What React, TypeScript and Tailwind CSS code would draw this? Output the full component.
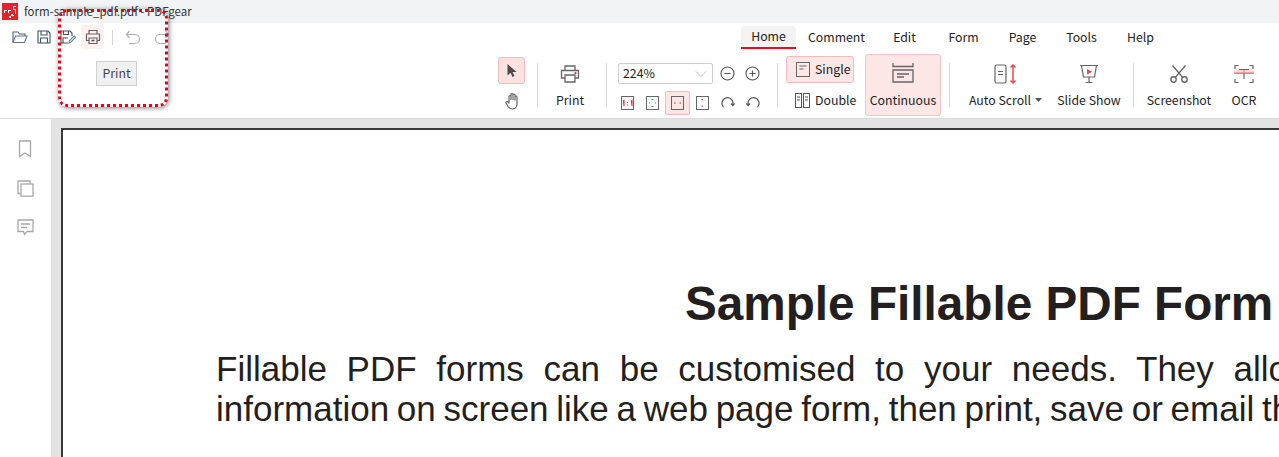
import React from "react";

const G = "#666666";
const R = "#f0444f";

function Svg({ w, h, children, className }: { w: number; h: number; children: React.ReactNode; className?: string }) {
  return (
    <svg width={w} height={h} viewBox={`0 0 ${w} ${h}`} fill="none" stroke={G} strokeWidth={1.2} className={className}>
      {children}
    </svg>
  );
}

function Logo() {
  return (
    <svg width="16" height="17" viewBox="0 0 16 17" className="shrink-0">
      <rect width="16" height="17" fill="#e8202c" />
      <g fill="#fff">
        <rect x="2" y="7" width="1" height="3" /><rect x="3" y="7" width="2" height="1" />
        <rect x="6" y="7" width="1" height="3" /><rect x="7" y="7" width="2" height="1" />
        <rect x="11" y="3" width="3" height="1" /><rect x="11" y="3" width="1" height="3" /><rect x="11" y="6" width="3" height="1" /><rect x="13" y="6" width="1" height="5" />
        <rect x="9" y="11" width="2" height="2" /><rect x="7" y="13" width="2" height="2" /><rect x="11" y="12" width="1" height="1" />
      </g>
    </svg>
  );
}

function Tab({ label, w, active }: { label: string; w: number; active?: boolean }) {
  return (
    <div style={{ width: w }} className={`h-[23px] flex items-center justify-center ${active ? "bg-[#f3f3f3] rounded-t border-b-2 border-[#ee0a1c]" : ""}`}>
      {label}
    </div>
  );
}

function Sep() {
  return <div className="w-px h-[44px] bg-[#d6d6d6] shrink-0" />;
}

function Small({ children, active }: { children: React.ReactNode; active?: boolean }) {
  return (
    <div className={`w-[25px] h-[24px] flex items-center justify-center rounded-[2px] ${active ? "bg-[#fde6e6] border border-[#f8b9b9]" : ""}`}>
      {children}
    </div>
  );
}

export default function App() {
  return (
    <div className="relative w-[1279px] h-[457px] overflow-hidden bg-[#e3e3e3] text-[12.3px] text-[#222] [font-family:'Noto_Sans_CJK_SC','Noto_Sans',sans-serif]">
      {/* title bar */}
      <div className="h-[23px] bg-[#f2f3f5] flex items-center pl-[2px] gap-[6px]">
        <Logo />
        <span className="text-[11.5px] text-[#333] leading-none">form-sample_pdf.pdf - PDFgear</span>
      </div>

      {/* toolbar */}
      <div className="h-[96px] bg-white border-b border-[#dcdcdc] flex">
        {/* quick access */}
        <div className="w-[498px] shrink-0 flex items-start pt-[2px] pl-[12px]">
          <div className="h-[24px] flex items-center">
            <svg width="16" height="14" viewBox="0 0 16 14" fill="none" stroke="#4f5f6f" strokeWidth="1.1">
              <path d="M1 12V2h5l1.5 2H13v2" />
              <path d="M1 12.5h11.5L15 6H3.5z" stroke="#5b7590" />
            </svg>
            <svg width="14" height="14" viewBox="0 0 14 14" fill="none" stroke="#3f5264" strokeWidth="1.1" className="ml-[9px]">
              <path d="M1 1h10l2 2v10H1z" />
              <path d="M4 1v4h6V1M3.5 13V8h7v5" />
            </svg>
            <svg width="16" height="14" viewBox="0 0 16 14" fill="none" stroke="#3f5264" strokeWidth="1.1" className="ml-[9px]">
              <path d="M8 13H1V1h9l2 2v3" />
              <path d="M3.5 1v3.5h5V1M3 13V8h5" />
              <path d="M9 13l.5-2.5L14 6l1.5 1.5-4.5 4.5z" stroke="#5b85b0" />
            </svg>
            <div className="ml-[5px] w-[23px] h-[24px] bg-[#fdf0ef] rounded-[3px] flex items-center justify-center">
              <Svg w={16} h={16}>
                <path d="M4 5V1.5h8V5" />
                <path d="M4 11.5H1.5V5h13v6.5H12" />
                <path d="M4 9h8v5.5H4z" />
                <path d="M6.5 11.5h3" stroke="#555" strokeWidth="1.6" />
              </Svg>
            </div>
            <div className="ml-[8px] w-px h-[15px] bg-[#d4d4d4]" />
            <svg width="16" height="15" viewBox="0 0 16 15" fill="none" stroke="#b0b0b0" strokeWidth="1.2" className="ml-[12px]">
              <path d="M4.5 1L1.5 4.5 4.5 8" />
              <path d="M1.5 4.5H10a4.5 4.5 0 010 9H4" />
            </svg>
            <svg width="16" height="15" viewBox="0 0 16 15" fill="none" stroke="#b0b0b0" strokeWidth="1.2" className="ml-[13px]">
              <path d="M11.5 1l3 3.5-3 3.5" />
              <path d="M14.5 4.5H6a4.5 4.5 0 000 9h6" />
            </svg>
          </div>
        </div>

        {/* ribbon */}
        <div className="flex-1 flex flex-col">
          <div className="flex items-start pt-[3px] h-[28px]">
            <div className="w-[243px]" />
            <Tab label="Home" w={55} active />
            <div className="w-[12px]" />
            <Tab label="Comment" w={57} />
            <div className="w-[28px]" />
            <Tab label="Edit" w={23} />
            <div className="w-[32px]" />
            <Tab label="Form" w={31} />
            <div className="w-[29px]" />
            <Tab label="Page" w={29} />
            <div className="w-[29px]" />
            <Tab label="Tools" w={31} />
            <div className="w-[30px]" />
            <Tab label="Help" w={27} />
          </div>

          <div className="flex items-center h-[67px] pt-[1px]">
            {/* select / hand */}
            <div className="w-[27px] flex flex-col gap-[5px] items-center">
              <div className="w-[27px] h-[27px] bg-[#fde2e2] border border-[#f8b9b9] rounded-[3px] flex items-center justify-center">
                <svg width="12" height="15" viewBox="0 0 12 15"><path d="M1.5 1v11.5l3-2.8 2 4.3 2-1-2-4h4z" fill="#4a4a4a" /></svg>
              </div>
              <div className="h-[25px] flex items-center pl-[2px]">
                <Svg w={16} h={18}>
                  <path d="M4 11V4.5a1 1 0 012 0V8M6 8V2.5a1 1 0 012 0V8M8 8V3a1 1 0 012 0V8M10 8.5V5a1 1 0 012 0v7c0 3-2 5-4.5 5S4 16 3 14.5L1 11c-.5-1 1-2 2-1l1 1.5" />
                </Svg>
              </div>
            </div>
            <div className="w-[12px]" /><Sep />

            {/* print */}
            <div className="w-[68px] pr-[4px] flex flex-col items-center gap-[10px]">
              <svg width="20" height="20" viewBox="0 0 20 20" fill="none" stroke={G} strokeWidth="1.3">
                <path d="M5 6V2h10v4" />
                <path d="M5 14H1.5V6.5h17V14H15" />
                <path d="M5 11h10v7H5z" />
                <rect x="14.5" y="8" width="2" height="2" fill={R} stroke="none" />
              </svg>
              <span className="leading-none">Print</span>
            </div>
            <Sep />

            {/* zoom */}
            <div className="w-[170px] pl-[11px] mt-[8px] flex flex-col gap-[7px]">
              <div className="flex items-center">
                <div className="w-[95px] h-[21px] border border-[#cfcfcf] rounded-[2px] flex items-center justify-between pl-[4px] pr-[5px]">
                  <span className="leading-none">224%</span>
                  <svg width="12" height="6" viewBox="0 0 12 6" fill="none" stroke="#bdbdbd" strokeWidth="1"><path d="M1 .5l5 5 5-5" /></svg>
                </div>
                <svg width="15" height="15" viewBox="0 0 15 15" fill="none" stroke="#555" strokeWidth="1.1" className="ml-[7px]">
                  <circle cx="7.5" cy="7.5" r="6.5" /><path d="M4.5 7.5h6" />
                </svg>
                <svg width="15" height="15" viewBox="0 0 15 15" fill="none" stroke="#555" strokeWidth="1.1" className="ml-[10px]">
                  <circle cx="7.5" cy="7.5" r="6.5" /><path d="M4.5 7.5h6M7.5 4.5v6" />
                </svg>
              </div>
              <div className="flex items-center -ml-[3px]">
                <Small>
                  <svg width="13" height="14" viewBox="0 0 13 14"><rect x=".5" y=".5" width="12" height="13" fill="none" stroke={G} /><path d="M2 5l1-.5V10M10 5l1-.5V10M6.5 6v1M6.5 8.5v1" stroke={R} strokeWidth="1.2" /></svg>
                </Small>
                <Small>
                  <svg width="13" height="14" viewBox="0 0 13 14"><rect x=".5" y=".5" width="12" height="13" fill="none" stroke={G} /><g fill={R}><rect x="5.5" y="3" width="2" height="1" /><rect x="5.5" y="10" width="2" height="1" /><rect x="3" y="6.5" width="1" height="1" /><rect x="9" y="6.5" width="1" height="1" /></g></svg>
                </Small>
                <Small active>
                  <svg width="13" height="14" viewBox="0 0 13 14"><rect x=".5" y=".5" width="12" height="13" fill="none" stroke={G} /><g fill={R}><rect x="3" y="6.5" width="1.5" height="1.2" /><rect x="8.5" y="6.5" width="1.5" height="1.2" /></g></svg>
                </Small>
                <Small>
                  <svg width="13" height="14" viewBox="0 0 13 14"><rect x=".5" y=".5" width="12" height="13" fill="none" stroke={G} /><g fill={R}><rect x="5.5" y="3" width="1.5" height="1.2" /><rect x="5.5" y="9.5" width="1.5" height="1.2" /></g></svg>
                </Small>
                <Small>
                  <svg width="14" height="14" viewBox="0 0 14 14" fill="none" stroke="#555" strokeWidth="1.2"><path d="M2.5 11A5.5 5.5 0 1111.8 8.5" /><path d="M10 7.5l1.8 2 1.8-2" /></svg>
                </Small>
                <Small>
                  <svg width="14" height="14" viewBox="0 0 14 14" fill="none" stroke="#555" strokeWidth="1.2"><path d="M11.5 11A5.5 5.5 0 102.2 8.5" /><path d="M.4 7.5l1.8 2 1.8-2" /></svg>
                </Small>
              </div>
            </div>
            <Sep />

            {/* page layout */}
            <div className="w-[8px]" />
            <div className="w-[68px] flex flex-col items-start gap-[4px] -mt-[1px]">
              <div className="w-[68px] h-[27px] bg-[#fde6e6] border border-[#f8b9b9] rounded-[3px] flex items-center pl-[9px] gap-[5px]">
                <svg width="14" height="15" viewBox="0 0 14 15" fill="none" stroke={G} strokeWidth="1"><rect x=".5" y=".5" width="13" height="14" /><path d="M3.5 4h7M3.5 7h4" /></svg>
                <span className="leading-none pt-[1px]">Single</span>
              </div>
              <div className="w-[72px] h-[27px] flex items-center pl-[9px] gap-[5px]">
                <svg width="15" height="15" viewBox="0 0 15 15" fill="none" stroke="#555" strokeWidth="1"><rect x=".5" y=".5" width="6" height="14" /><rect x="8.5" y=".5" width="6" height="14" /><path d="M2 4h3M2 7h3M10 4h3M10 7h3" /></svg>
                <span className="leading-none">Double</span>
              </div>
            </div>
            <div className="w-[11px]" />
            <div className="w-[76px] h-[62px] bg-[#fde6e6] border border-[#f8c4c4] rounded-[3px] flex flex-col items-center pt-[7px] gap-[11px]">
              <svg width="22" height="21" viewBox="0 0 22 21" fill="none" stroke={G} strokeWidth="1.3">
                <path d="M1 1v3.5h20V1" />
                <path d="M1 8h20v12H1z" />
                <path d="M5 12h12M5 15h7" />
              </svg>
              <span className="leading-none">Continuous</span>
            </div>
            <div className="w-[8px]" /><Sep />

            {/* auto scroll */}
            <div className="w-[18px]" />
            <div className="w-[75px] flex flex-col items-center gap-[10px]">
              <svg width="24" height="20" viewBox="0 0 24 20" fill="none" stroke={G} strokeWidth="1.2">
                <rect x="1" y="1" width="11" height="18" rx="1.5" />
                <path d="M4 7.5h5M4 10.5h5" />
                <path d="M19 1v18M16.5 3.5L19 1l2.5 2.5M16.5 16.5L19 19l2.5-2.5" stroke={R} strokeWidth="1.5" />
              </svg>
              <div className="flex items-center gap-[4px] leading-none whitespace-nowrap">
                <span>Auto Scroll</span>
                <svg width="7" height="4" viewBox="0 0 7 4"><path d="M0 0h7L3.5 4z" fill="#555" /></svg>
              </div>
            </div>
            <div className="w-[14px]" />
            <div className="w-[64px] flex flex-col items-center gap-[10px]">
              <svg width="20" height="20" viewBox="0 0 20 20" fill="none" stroke={G} strokeWidth="1.2">
                <path d="M1 1.5h18M2.5 1.5L4.5 13h11l2-11.5M10 13v5M6.5 18.5h7" />
                <path d="M8 5l5 2.7-5 2.7z" fill={R} stroke="none" />
              </svg>
              <span className="leading-none whitespace-nowrap">Slide Show</span>
            </div>
            <div className="w-[12px]" /><Sep />

            {/* screenshot / OCR */}
            <div className="w-[13px]" />
            <div className="w-[64px] flex flex-col items-center gap-[10px]">
              <svg width="20" height="20" viewBox="0 0 20 20" fill="none" stroke={G} strokeWidth="1.4">
                <circle cx="4.5" cy="15.5" r="2.7" /><circle cx="15.5" cy="15.5" r="2.7" />
                <path d="M6.3 13.4L16.5 1.5M13.7 13.4L3.5 1.5" />
              </svg>
              <span className="leading-none">Screenshot</span>
            </div>
            <div className="w-[20px]" />
            <div className="w-[26px] flex flex-col items-center gap-[10px]">
              <svg width="20" height="20" viewBox="0 0 20 20" fill="none" stroke={G} strokeWidth="1.2">
                <path d="M1 5V1.5h3.5M15.5 1.5H19V5M1 15v3.5h3.5M15.5 18.5H19V15" />
                <path d="M5 5.5h10M10 5.5V15" />
                <path d="M0 9h20" stroke={R} strokeWidth="1.4" />
                <rect x="0" y="6" width="20" height="3" fill="#fbb" stroke="none" opacity=".6" />
              </svg>
              <span className="leading-none">OCR</span>
            </div>
          </div>
        </div>
      </div>

      {/* body */}
      <div className="h-[338px] flex">
        <div className="w-[51px] shrink-0 bg-white flex flex-col items-center pt-[21px] gap-[22px] pr-[1px]">
          <svg width="14" height="18" viewBox="0 0 14 18" fill="none" stroke="#a8a8a8" strokeWidth="1.3"><path d="M1.5 1h11v15.5L7 13l-5.5 3.5z" /></svg>
          <svg width="17" height="17" viewBox="0 0 17 17" fill="none" stroke="#a8a8a8" strokeWidth="1.3"><path d="M3.5 13.5H1V1h12v3" /><rect x="4" y="4" width="12" height="12.2" /></svg>
          <svg width="17" height="17" viewBox="0 0 17 17" fill="none" stroke="#a8a8a8" strokeWidth="1.3"><path d="M1 1h15v11.5H10l-2.5 3-1-3H1z" /><path d="M4 5h9M4 8.5h6" /></svg>
        </div>
        <div className="flex-1 min-w-0 pl-[10px] pt-[9px] overflow-hidden">
          <div className="w-[1300px] h-[400px] bg-white border-t-2 border-l-2 border-[#3a3a3a] [font-family:'Liberation_Sans',sans-serif] text-[#231f20] overflow-hidden">
            <div className="pl-[622px] pt-[147px] font-bold text-[47.7px] leading-[54px] whitespace-nowrap">Sample Fillable PDF Form</div>
            <div className="pl-[153px] pt-[18px] text-[35px] leading-[40px] whitespace-nowrap">
              <div className="[word-spacing:10px]">Fillable PDF forms can be customised to your needs. They allow</div>
              <div className="[word-spacing:-2px]">information on screen like a web page form, then print, save or email them</div>
            </div>
          </div>
        </div>
      </div>

      {/* tooltip */}
      <div className="absolute left-[96px] top-[61px] w-[41px] h-[25px] bg-[#f0f0f0] border border-[#cfcfcf] flex items-center justify-center text-[12.3px] text-[#444]">Print</div>

      {/* annotation */}
      <div className="absolute left-[58px] top-[9px] w-[110px] h-[98px] rounded-[9px] border-[3px] border-dotted border-[#f0000f] shadow-[1px_1px_5px_rgba(0,0,0,0.5)] pointer-events-none" />
    </div>
  );
}
